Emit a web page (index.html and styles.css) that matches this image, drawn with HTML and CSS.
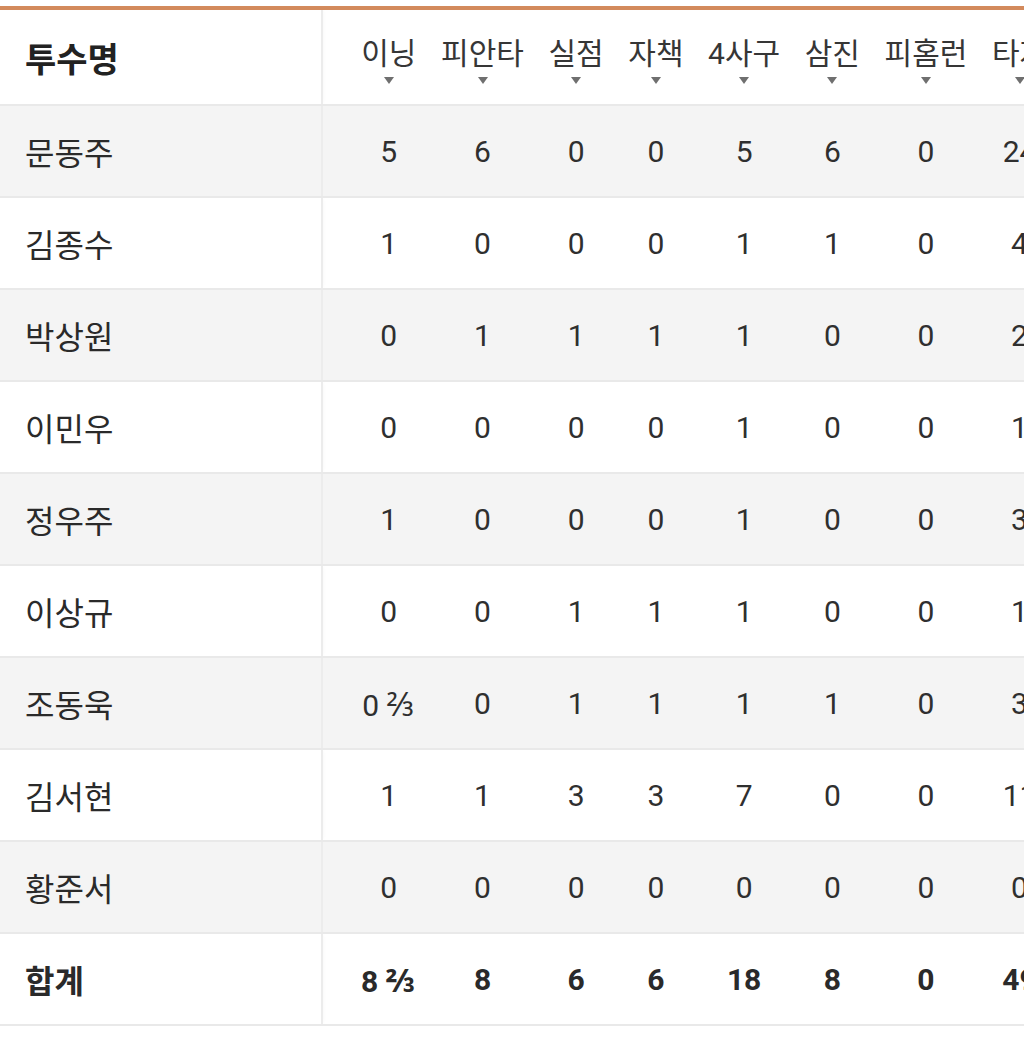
FILE: index.html
```html
<!DOCTYPE html>
<html lang="ko">
<head>
<meta charset="utf-8">
<link rel="stylesheet" href="styles.css">
</head>
<body>
<div class="wrap">
<table class="stats">
  <thead>
    <tr>
      <th class="name">투수명</th>
      <th class="first"><span class="lbl">이닝</span><span class="arrow"></span></th>
      <th><span class="lbl">피안타</span><span class="arrow"></span></th>
      <th><span class="lbl">실점</span><span class="arrow"></span></th>
      <th><span class="lbl">자책</span><span class="arrow"></span></th>
      <th><span class="lbl">4사구</span><span class="arrow"></span></th>
      <th><span class="lbl">삼진</span><span class="arrow"></span></th>
      <th><span class="lbl">피홈런</span><span class="arrow"></span></th>
      <th><span class="lbl">타자</span><span class="arrow"></span></th>
      <th><span class="lbl">투구수</span><span class="arrow"></span></th>
    </tr>
  </thead>
  <tbody>
    <tr class="alt"><td class="name">문동주</td><td class="first">5</td><td>6</td><td>0</td><td>0</td><td>5</td><td>6</td><td>0</td><td>24</td><td>98</td></tr>
    <tr><td class="name">김종수</td><td class="first">1</td><td>0</td><td>0</td><td>0</td><td>1</td><td>1</td><td>0</td><td>4</td><td>17</td></tr>
    <tr class="alt"><td class="name">박상원</td><td class="first">0</td><td>1</td><td>1</td><td>1</td><td>1</td><td>0</td><td>0</td><td>2</td><td>12</td></tr>
    <tr><td class="name">이민우</td><td class="first">0</td><td>0</td><td>0</td><td>0</td><td>1</td><td>0</td><td>0</td><td>1</td><td>6</td></tr>
    <tr class="alt"><td class="name">정우주</td><td class="first">1</td><td>0</td><td>0</td><td>0</td><td>1</td><td>0</td><td>0</td><td>3</td><td>14</td></tr>
    <tr><td class="name">이상규</td><td class="first">0</td><td>0</td><td>1</td><td>1</td><td>1</td><td>0</td><td>0</td><td>1</td><td>5</td></tr>
    <tr class="alt"><td class="name">조동욱</td><td class="first">0 <span class="frac">⅔</span></td><td>0</td><td>1</td><td>1</td><td>1</td><td>1</td><td>0</td><td>3</td><td>13</td></tr>
    <tr><td class="name">김서현</td><td class="first">1</td><td>1</td><td>3</td><td>3</td><td>7</td><td>0</td><td>0</td><td>11</td><td>40</td></tr>
    <tr class="alt"><td class="name">황준서</td><td class="first">0</td><td>0</td><td>0</td><td>0</td><td>0</td><td>0</td><td>0</td><td>0</td><td>4</td></tr>
    <tr class="total"><td class="name">합계</td><td class="first">8 <span class="frac">⅔</span></td><td>8</td><td>6</td><td>6</td><td>18</td><td>8</td><td>0</td><td>49</td><td>209</td></tr>
  </tbody>
</table>
</div>
</body>
</html>
```

FILE: styles.css
```css
html, body {
  margin: 0;
  padding: 0;
  background: #ffffff;
}

body {
  padding-top: 6px;
  font-family: Roboto, "Noto Sans CJK KR", "Noto Sans", sans-serif;
  color: #2b2b2b;
  overflow: hidden;
}

.wrap {
  width: 1024px;
  overflow: hidden;
}

.stats {
  border-collapse: collapse;
  border-top: 4px solid #d38a5c;
  white-space: nowrap;
}

.stats th,
.stats td {
  padding: 0 12.3px;
  text-align: center;
  font-weight: normal;
  border-bottom: 2px solid #e9e9e9;
}

.stats thead th {
  height: 97px;
  vertical-align: top;
  padding-top: 26px;
  box-sizing: border-box;
}

.stats th .lbl {
  display: block;
  font-size: 30px;
  line-height: 36px;
  color: #363636;
}

.stats th .arrow {
  display: block;
  width: 0;
  height: 0;
  margin: 5px auto 0;
  border-left: 5px solid transparent;
  border-right: 5px solid transparent;
  border-top: 7px solid #6f6f6f;
}

.stats thead th.name {
  vertical-align: middle;
  padding-top: 0;
  font-size: 34px;
  font-weight: bold;
  color: #222222;
}

.stats .name {
  width: 322px;
  min-width: 322px;
  max-width: 322px;
  box-sizing: border-box;
  text-align: left;
  padding-left: 25px;
  border-right: 2px solid #ececec;
  box-shadow: 3px 0 4px -2px rgba(0, 0, 0, 0.04);
}

.stats .first {
  padding-left: 38px;
}

.stats tbody td {
  height: 90px;
  font-size: 30px;
  vertical-align: middle;
  color: #2f2f2f;
}

.stats tbody td.name {
  font-size: 32px;
  color: #2a2a2a;
}

.stats tbody tr.alt td {
  background: #f4f4f4;
}

.frac {
  font-size: 32px;
}

.stats tbody tr.total td {
  font-weight: bold;
  color: #2a2a2a;
}
```
